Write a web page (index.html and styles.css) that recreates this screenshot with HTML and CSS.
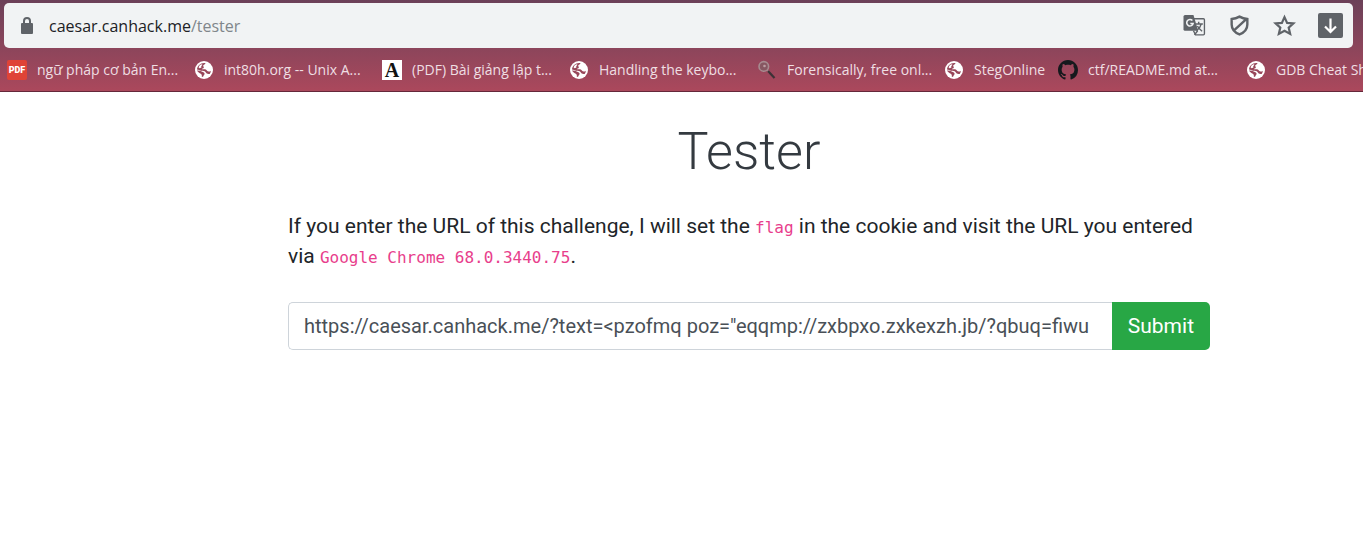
FILE: index.html
```
<!DOCTYPE html>
<html lang="en">
<head>
<meta charset="utf-8">
<title>Tester</title>
<link rel="stylesheet" href="styles.css">
</head>
<body>
<svg class="symbols" aria-hidden="true">
  <symbol id="globe" viewBox="0 0 20 20">
    <circle cx="10" cy="10" r="9" fill="#fff"/>
    <path fill="#98475a" d="M11.500 3C11.200 4.500 9.600 4.600 9.200 5.500c-.3.900.8 1.300.6 2.200-.3.900-1.800.5-2.100 1.500 1.300.3 2.900-.4 4 .300 1.200.7 1.500 2.200 3.200 2.100.9 0 1.500-.4 2.100-.9-.2 1.200-.7 2.300-1.300 3.200-1.900.5-3.500-.3-4.200-1.800-.7-1.300-2.600-.8-4.200-1.300C5.500 10.300 4.500 9.500 3 9.400 3.300 5.600 6.600 2.300 11.500 3z"/>
    <path fill="#98475a" d="M3 10.500c2.400-.3 4.300.8 5.800 1.400 1.700.7 2.300 1.800 1.400 2.800-.7.700-.8 1.500-1.200 2.200l-1.300-.3c.5-1.500-.1-2.400-1.400-3.100-1.200-.7-2.600-1.300-3.300-3z"/>
    <path fill="#fff" d="M5.500 5.500l1.700-1.300 1.300.6-1.300 1.500.2 1.300-1.800.7-1.100-1z"/>
  </symbol>
</svg>
<header class="browser">
  <div class="address">
    <svg class="lock" viewBox="0 0 14 18" aria-hidden="true"><rect x="1" y="6" width="12" height="11" rx="1" fill="#5f6368"/><path d="M4 7V4a3 3 0 0 1 6 0v3" fill="none" stroke="#5f6368" stroke-width="2"/></svg>
    <span class="url">caesar.canhack.me<span class="path">/tester</span></span>
    <div class="tools">
      <button aria-label="Translate"><svg class="tool" viewBox="0 0 22 22"><path d="M8 4.500h11.500q1 0 1 1V19q0 1-1 1H12l-2-4" fill="#f1f3f4" stroke="#5f6368" stroke-width="1.300"/><path d="M2 1h8l4.500 15H2q-1.500 0-1.500-1.500v-12Q.500 1 2 1z" fill="#5f6368"/><path d="M9 6.300A3.100 3.100 0 1 0 9.700 9H7" fill="none" stroke="#f1f3f4" stroke-width="1.500"/><path d="M12 9.500h7M15 7.500v2M17.500 9.500q-1 4-4.500 6.500M13.800 11.500q1.500 3 4.500 5M11 20l3-4" fill="none" stroke="#5f6368" stroke-width="1.400"/></svg></button>
      <button aria-label="Site protection"><svg class="tool" viewBox="0 0 22 22"><path d="M11 2.500q3.500 2 7.500 2.300V10q0 6.500-7.500 9.500Q3.500 16.500 3.500 10V4.800Q7.500 4.500 11 2.500zM5.500 16L17.500 5" fill="none" stroke="#5f6368" stroke-width="2.300"/></svg></button>
      <button aria-label="Bookmark this page"><svg class="tool" viewBox="0 0 22 22"><path d="M11 3l2.500 5.500 6 .5-4.500 4 1.400 6L11 16l-5.400 3L7 13 2.500 9l6-.5z" fill="none" stroke="#5f6368" stroke-width="2.100"/></svg></button>
      <button aria-label="Download"><svg class="download" viewBox="0 0 25 25"><rect width="25" height="25" rx="2" fill="#5f6368"/><path d="M12.500 5.500v13M7 13.500l5.500 5.500 5.500-5.500" fill="none" stroke="#fff" stroke-width="2.200"/></svg></button>
    </div>
  </div>
  <nav class="bookmarks" aria-label="Bookmarks">
    <a href="#"><span class="icon pdf">PDF</span><span>ngữ pháp cơ bản En...</span></a>
    <a href="#"><svg class="icon"><use href="#globe"/></svg><span>int80h.org -- Unix A...</span></a>
    <a href="#"><span class="icon letter">A</span><span>(PDF) Bài giảng lập t...</span></a>
    <a href="#"><svg class="icon"><use href="#globe"/></svg><span>Handling the keybo...</span></a>
    <a href="#"><svg class="icon" viewBox="0 0 20 20"><path d="M10.500 10.500l2 2" stroke="#b8a0a4" stroke-width="1.500"/><path d="M11 11l6.500 7" stroke="#3b3236" stroke-width="2.200"/><circle cx="6.800" cy="6.400" r="4.800" fill="#875762" stroke="#a78b90" stroke-width="1.600"/><circle cx="7.500" cy="6" r="1.300" fill="#bd9da3"/></svg><span>Forensically, free onl...</span></a>
    <a href="#"><svg class="icon"><use href="#globe"/></svg><span>StegOnline</span></a>
    <a href="#"><svg class="icon" viewBox="0 0 16 16"><path fill="#16191d" d="M8 0C3.580 0 0 3.580 0 8c0 3.540 2.290 6.530 5.470 7.590.4.070.550-.170.550-.380 0-.190-.010-.820-.010-1.490-2.010.370-2.530-.490-2.690-.940-.090-.230-.480-.940-.820-1.130-.280-.150-.680-.520-.010-.530.630-.010 1.080.580 1.230.820.720 1.210 1.870.870 2.330.660.070-.520.280-.870.510-1.070-1.780-.200-3.640-.890-3.640-3.950 0-.870.310-1.590.820-2.150-.080-.200-.360-1.020.080-2.120 0 0 .670-.210 2.200.820.640-.180 1.320-.270 2-.270s1.360.090 2 .270c1.530-1.040 2.200-.820 2.200-.820.440 1.100.160 1.920.080 2.120.510.560.820 1.270.820 2.150 0 3.070-1.870 3.750-3.650 3.950.290.250.540.730.540 1.480 0 1.070-.010 1.930-.010 2.200 0 .210.150.460.550.380A8 8 0 0 0 16 8c0-4.420-3.580-8-8-8z"/></svg><span>ctf/README.md at...</span></a>
    <a href="#"><svg class="icon"><use href="#globe"/></svg><span>GDB Cheat Sheet</span></a>
  </nav>
</header>
<main class="page">
  <div class="content">
    <h1>Tester</h1>
    <p>If you enter the URL of this challenge, I will set the <code>flag</code> in the cookie and visit the URL you entered via <code>Google Chrome 68.0.3440.75</code>.</p>
    <form class="group">
      <input type="text" aria-label="URL" value="https://caesar.canhack.me/?text=&lt;pzofmq poz=&quot;eqqmp://zxbpxo.zxkexzh.jb/?qbuq=fiwu">
      <button type="button">Submit</button>
    </form>
  </div>
</main>
</body>
</html>
```
FILE: styles.css
```
* { box-sizing: border-box; }
body {
  margin: 0;
  background: #fff;
  color: #212529;
  font-family: Roboto, "Noto Sans", sans-serif;
  overflow-x: hidden;
}
.symbols { display: none; }
.browser {
  padding-top: 3px;
  background: linear-gradient(#6b4058, #8a455b 50%, #ab485c);
  border-bottom: 1px solid #65283a;
  font-family: "Open Sans", "Noto Sans", sans-serif;
}
.address {
  display: flex;
  align-items: center;
  height: 45px;
  margin: 0 10px 0 4px;
  padding: 0 10px 0 16px;
  background: #f1f3f4;
  border-radius: 5px;
}
.lock { width: 14px; height: 18px; }
.url { flex: 1; margin-left: 15px; font-size: 16px; color: #202124; }
.path { color: #80868b; }
.tools { display: flex; align-items: center; gap: 22px; }
.tools button {
  display: flex;
  padding: 0;
  border: 0;
  background: none;
}
.tool { width: 23px; height: 23px; }
.download { width: 25px; height: 25px; }
.bookmarks {
  display: grid;
  grid-template-columns: 187px 188px 187px 188px 187px 114px 188px auto;
  height: 43px;
  padding-left: 7px;
  overflow: hidden;
}
.bookmarks a {
  display: flex;
  align-items: center;
  gap: 10px;
  min-width: 0;
  color: #efdfe3;
  font-size: 14px;
  line-height: 20px;
  text-decoration: none;
  white-space: nowrap;
}
.icon { flex: none; width: 20px; height: 20px; }
.pdf {
  border-radius: 2px;
  background: #df4337;
  color: #fff;
  font-family: Roboto, sans-serif;
  font-size: 9px;
  font-weight: 900;
  text-align: center;
}
.letter {
  background: #fff;
  color: #111;
  font: bold 20px/20px "Liberation Serif", serif;
  text-align: center;
}
.page {
  display: flex;
  justify-content: center;
  padding: 24px 153px 32px 288px;
}
.content { width: 100%; max-width: 960px; }
h1 {
  margin: 0 0 23px;
  color: #343a40;
  font-size: 52px;
  font-weight: 300;
  line-height: 72px;
  text-align: center;
}
p {
  margin: 0 0 31px;
  font-size: 21px;
  font-weight: 400;
  line-height: 30px;
}
code {
  color: #e83e8c;
  font-family: "DejaVu Sans Mono", "Liberation Mono", monospace;
  font-size: 16px;
  line-height: 16px;
}
.group { display: flex; height: 48px; }
.group input {
  flex: 1;
  min-width: 0;
  padding: 0 15px;
  border: 1px solid #ced4da;
  border-right: 0;
  border-radius: 5px 0 0 5px;
  background: #fff;
  color: #495057;
  font: 20px Roboto, sans-serif;
}
.group button {
  padding: 0 16px;
  border: 0;
  border-radius: 0 5px 5px 0;
  background: #28a745;
  color: #fff;
  font: 21px Roboto, sans-serif;
}
```
